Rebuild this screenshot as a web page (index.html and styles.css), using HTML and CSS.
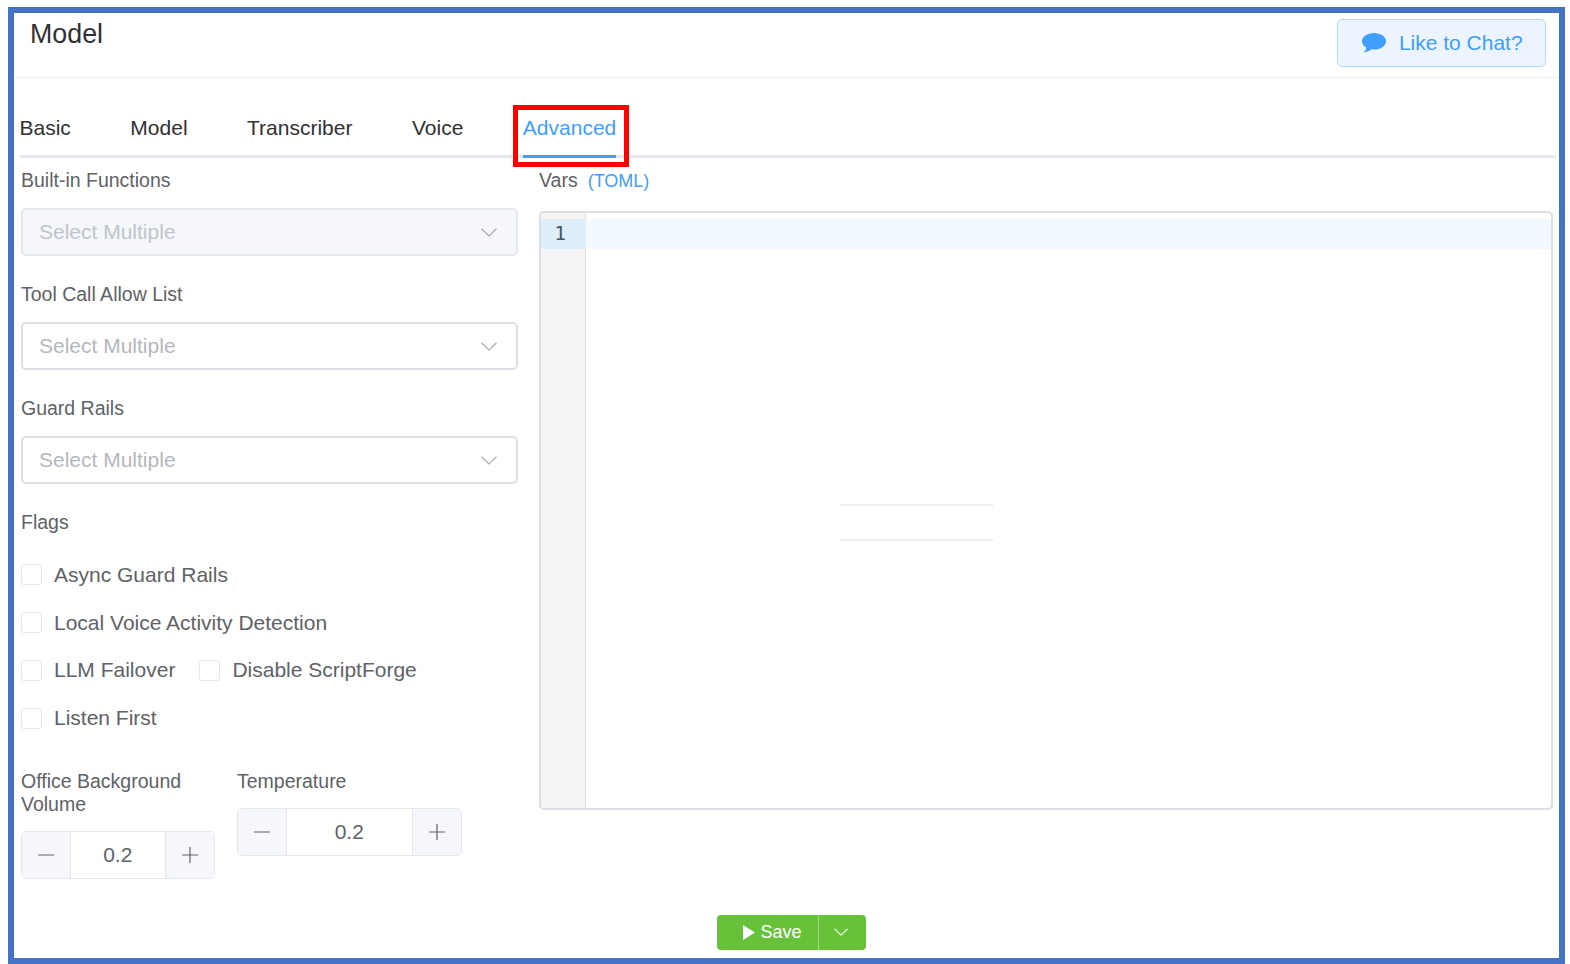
FILE: index.html
```html
<!DOCTYPE html>
<html lang="en">
<head>
<meta charset="utf-8">
<title>Model</title>
<link rel="stylesheet" href="styles.css">
</head>
<body>
<div class="frame">
  <header class="header">
    <h1 class="title">Model</h1>
    <button class="chat" type="button">
      <svg class="chat-icon" viewBox="0 0 24 20"><path d="M12 0C5.4 0 0 3.6 0 8.2c0 2.6 1.7 4.9 4.4 6.400-.3 1.900-1.200 3.500-2.600 4.900 2.900-.3 5.700-1.600 7.700-3.200.8.100 1.600.2 2.500.2 6.600 0 12-3.700 12-8.300S18.600 0 12 0z"/></svg>
      <span>Like to Chat?</span>
    </button>
  </header>

  <nav class="tabs">
    <span class="tab">Basic</span>
    <span class="tab">Model</span>
    <span class="tab">Transcriber</span>
    <span class="tab">Voice</span>
    <span class="tab tab-active">Advanced<i class="highlight"></i></span>
  </nav>

  <main class="content">
    <section class="left">
      <div class="field">
        <label class="label">Built-in Functions</label>
        <div class="select select-disabled">
          <span>Select Multiple</span>
          <svg class="chevron" viewBox="0 0 16 9"><path d="M.5.8 8 8l7.500-7.200"/></svg>
        </div>
      </div>
      <div class="field">
        <label class="label">Tool Call Allow List</label>
        <div class="select">
          <span>Select Multiple</span>
          <svg class="chevron" viewBox="0 0 16 9"><path d="M.5.8 8 8l7.500-7.200"/></svg>
        </div>
      </div>
      <div class="field">
        <label class="label">Guard Rails</label>
        <div class="select">
          <span>Select Multiple</span>
          <svg class="chevron" viewBox="0 0 16 9"><path d="M.5.8 8 8l7.500-7.200"/></svg>
        </div>
      </div>
      <div class="flags">
        <label class="label">Flags</label>
        <div class="check-list">
          <div class="check-row"><span class="check"><i class="box"></i>Async Guard Rails</span></div>
          <div class="check-row"><span class="check"><i class="box"></i>Local Voice Activity Detection</span></div>
          <div class="check-row">
            <span class="check"><i class="box"></i>LLM Failover</span>
            <span class="check"><i class="box"></i>Disable ScriptForge</span>
          </div>
          <div class="check-row"><span class="check"><i class="box"></i>Listen First</span></div>
        </div>
      </div>
      <div class="numbers">
        <div class="number-field number-volume">
          <label class="label">Office Background Volume</label>
          <div class="number">
            <span class="step"><svg viewBox="0 0 16 16"><path d="M0 8h16"/></svg></span>
            <span class="value">0.2</span>
            <span class="step"><svg viewBox="0 0 16 16"><path d="M0 8h16M8 0v16"/></svg></span>
          </div>
        </div>
        <div class="number-field number-temp">
          <label class="label">Temperature</label>
          <div class="number">
            <span class="step"><svg viewBox="0 0 16 16"><path d="M0 8h16"/></svg></span>
            <span class="value">0.2</span>
            <span class="step"><svg viewBox="0 0 16 16"><path d="M0 8h16M8 0v16"/></svg></span>
          </div>
        </div>
      </div>
    </section>

    <section class="right">
      <div class="label vars-label">Vars <a class="toml">(TOML)</a></div>
      <div class="editor">
        <div class="gutter"><div class="line-no">1</div></div>
        <div class="code"><div class="active-line"></div></div>
        <i class="ghost ghost-top"></i>
        <i class="ghost ghost-bottom"></i>
      </div>
    </section>
  </main>

  <footer class="footer">
    <div class="save">
      <span class="save-main"><svg class="play" viewBox="0 0 12 15"><path d="M0 0l12 7.500L0 15z"/></svg>Save</span>
      <span class="save-more"><svg class="chevron-white" viewBox="0 0 16 9"><path d="M.5.8 8 8l7.500-7.200"/></svg></span>
    </div>
  </footer>
</div>
</body>
</html>
```
FILE: styles.css
```css
* { box-sizing: border-box; }
html, body { margin: 0; padding: 0; background: #fff; }
body {
  padding: 7px 5px 0 8px;
  font-family: "Liberation Sans", Arial, sans-serif;
  color: #303133;
}
.frame {
  height: 957px;
  border: 6px solid #4472c4;
  background: #fff;
  overflow: hidden;
}
.header {
  height: 65px;
  border-bottom: 1px solid #ebeef5;
  display: flex;
  justify-content: space-between;
  padding: 0 13px 0 16px;
}
.title {
  margin: 5px 0 0;
  font-size: 26.8px;
  line-height: 32px;
  font-weight: 400;
  color: #303133;
}
.chat {
  margin-top: 6px;
  width: 209.500px;
  height: 48px;
  display: flex;
  align-items: center;
  justify-content: center;
  gap: 13px;
  background: #ecf5ff;
  border: 1px solid #b3d8ff;
  border-radius: 5px;
  color: #409eff;
  font: 400 21px "Liberation Sans", Arial, sans-serif;
  padding: 0 0 0 2px;
}
.chat-icon { width: 24px; height: 20px; fill: #409eff; }

.tabs {
  margin: 27px 3px 0 5.500px;
  height: 53px;
  display: flex;
  gap: 59.500px;
  border-bottom: 3px solid #e4e7ed;
}
.tab {
  position: relative;
  height: 53px;
  padding-top: 9.500px;
  font-size: 21px;
  line-height: 26px;
  color: #303133;
}
.tab-active {
  color: #409eff;
  border-bottom: 3px solid #409eff;
}
.highlight {
  position: absolute;
  left: -9.500px;
  right: -13px;
  top: 0;
  height: 62px;
  border: 5px solid #f00;
}

.content {
  display: flex;
  gap: 21px;
  padding: 11px 0 0 7px;
}
.left { width: 497px; flex: none; }
.right { width: 1014px; flex: none; }

.label {
  display: block;
  font-size: 19.500px;
  line-height: 23px;
  color: #606266;
}
.field { height: 114px; }
.field .label { margin-bottom: 16px; }
.select {
  height: 48px;
  border: 2px solid #dcdfe6;
  border-radius: 5px;
  display: flex;
  align-items: center;
  justify-content: space-between;
  padding: 0 19px 0 16px;
  font-size: 21px;
  color: #b4b7be;
  background: #fff;
}
.select-disabled { background: #f5f7fa; border-color: #e4e7ed; color: #c0c4cc; }
.chevron { width: 16px; height: 9px; fill: none; stroke: #a8abb2; stroke-width: 1.200; }

.check-list { padding-top: 17px; }
.check-row { height: 47.800px; display: flex; align-items: center; gap: 24px; }
.check {
  display: flex;
  align-items: center;
  gap: 12px;
  font-size: 21px;
  color: #606266;
}
.box {
  width: 21px;
  height: 21px;
  border: 1.500px solid #e4e7ed;
  border-radius: 3px;
  background: #fff;
  flex: none;
}

.numbers { display: flex; align-items: flex-start; gap: 22.500px; margin-top: 27.600px; }
.number-field .label { margin-bottom: 15px; }
.number-volume { width: 193.500px; }
.number-temp { width: 224.500px; }
.number {
  height: 48px;
  display: flex;
  border: 1.500px solid #e4e7ed;
  border-radius: 5px;
  overflow: hidden;
}
.step {
  width: 48px;
  flex: none;
  background: #f5f7fa;
  display: flex;
  align-items: center;
  justify-content: center;
}
.step svg { width: 16px; height: 16px; fill: none; stroke: #606266; stroke-width: 1.200; }
.value {
  flex: 1;
  display: flex;
  align-items: center;
  justify-content: center;
  border-left: 1.500px solid #e4e7ed;
  border-right: 1.500px solid #e4e7ed;
  font-size: 21px;
  color: #606266;
  background: #fff;
}

.vars-label { display: flex; align-items: baseline; gap: 10px; }
.toml { font-size: 18px; color: #409eff; }
.editor {
  position: relative;
  margin-top: 18px;
  height: 599px;
  border: 2px solid #dcdfe6;
  border-radius: 5px;
  display: flex;
  overflow: hidden;
}
.gutter { width: 45px; flex: none; background: #f5f5f5; border-right: 1px solid #dddddd; padding-top: 6px; }
.line-no {
  height: 30px;
  background: #deeefb;
  margin-right: -1px;
  font: 400 19.500px/30px "DejaVu Sans Mono", "Liberation Mono", monospace;
  color: #4a5560;
  text-align: right;
  padding-right: 20px;
}
.code { flex: 1; padding-top: 6px; }
.active-line { height: 30px; background: #f1f9ff; }
.ghost {
  position: absolute;
  left: 298.500px;
  width: 153px;
  height: 2px;
  background: #f0f0f2;
}
.ghost-top { top: 291px; }
.ghost-bottom { top: 326px; }

.footer { display: flex; justify-content: center; margin-top: 36px; padding-left: 9px; }
.save {
  width: 149px;
  height: 35px;
  display: flex;
  border-radius: 4px;
  background: #67c23a;
  color: #fff;
  font-size: 18px;
  overflow: hidden;
}
.save-main {
  width: 102px;
  display: flex;
  align-items: center;
  justify-content: flex-end;
  gap: 5px;
  padding-right: 16px;
  border-right: 1px solid #a3da88;
}
.play { width: 12px; height: 15px; fill: #fff; }
.save-more { flex: 1; display: flex; align-items: center; justify-content: center; padding-right: 2px; }
.chevron-white { width: 14px; height: 8px; fill: none; stroke: #fff; stroke-width: 1.200; }
```
